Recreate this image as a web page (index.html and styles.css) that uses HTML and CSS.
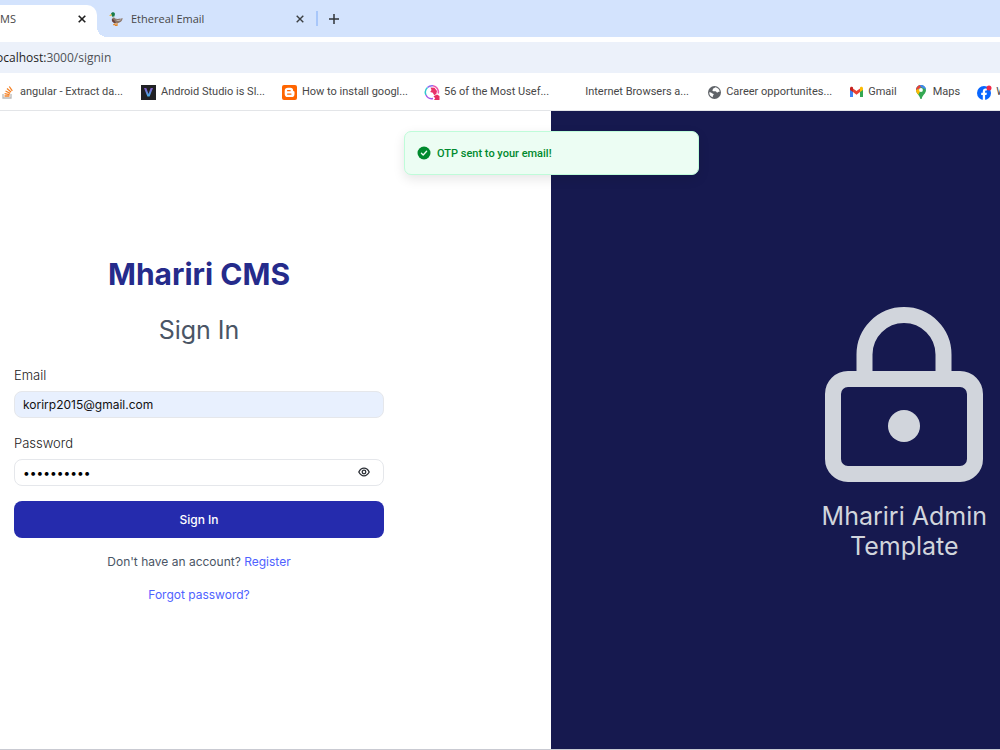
FILE: index.html
```
<!DOCTYPE html>
<html lang="en">
<head>
<meta charset="utf-8">
<title>Mhariri CMS</title>
<link rel="stylesheet" href="styles.css">
</head>
<body>
<header class="browser">
  <div class="tabs">
    <div class="tab tab-active">
      <span class="tab-title">MS</span>
      <button class="icon-button" type="button" aria-label="Close tab"><svg width="8" height="8" viewBox="0 0 8 8"><path d="M.7.7l6.6 6.6M7.3.7L.7 7.3" stroke="#1f1f1f" stroke-width="1.6"/></svg></button>
    </div>
    <div class="tab tab-idle">
      <svg class="favicon" width="14" height="14" viewBox="0 0 14 14"><path d="M3.6 5.5L5 4.6c.2 2 1.6 2.3 3.6 2.4 2.200 0 3.500-.3 5-.9-.2 2.600-1.900 5-5.400 5-3.300 0-5.300-1.500-5.100-3.600z" fill="#8b7568"/><path d="M3 6.800c-.8 2.700 1.200 4.500 4 4.300L5 8z" fill="#673f3a"/><path d="M6.500 7.500c2 .8 4 .5 6-.4-.8 2-3.700 3-6 .4z" fill="#c3b9b3"/><path d="M2 2C2.300.6 3.400 0 4.500.3c1.500.4 1.800 1.900 1.200 3L5 5.300 3.400 5z" fill="#187b4a"/><path d="M3.300 4.700L5.500 4.600v.9H3.200z" fill="#f3f3f3"/><path d="M2.200 2L.1 3.600c.8.600 2 .4 2.800-.1z" fill="#efb13b"/><path d="M6 11v1.700H4.200M8 11v2.300H6" fill="none" stroke="#e28528" stroke-width="1.200"/></svg>
      <span class="tab-title">Ethereal Email</span>
      <button class="icon-button" type="button" aria-label="Close tab"><svg width="8" height="8" viewBox="0 0 8 8"><path d="M.7.7l6.600 6.600M7.300.7L.7 7.300" stroke="#3c4043" stroke-width="1.400"/></svg></button>
    </div>
    <span class="tab-divider"></span>
    <button class="icon-button" type="button" aria-label="New tab"><svg width="10" height="10" viewBox="0 0 10 10"><path d="M5 0v10M0 5h10" stroke="#303438" stroke-width="1.500"/></svg></button>
  </div>
  <div class="address"><span class="address-clip"><span class="host">ocalhost:</span>3000/signin</span></div>
  <nav class="bookmarks" aria-label="Bookmarks">
    <a class="bookmark" href="#"><svg width="16" height="16" viewBox="0 0 16 16"><path d="M3 10v4h8v-4" fill="none" stroke="#b9b9b9" stroke-width="1.300"/><path d="M4.500 12h5M4.600 9.700l5 1M5.500 7l4.700 2.300M7 4.600l4 3.300M9.300 2.500l3 4.300" fill="none" stroke="#f48024" stroke-width="1.300"/></svg><span>angular - Extract da...</span></a>
    <a class="bookmark" href="#"><svg width="16" height="16" viewBox="0 0 16 16"><defs><linearGradient id="v" x2="0" y2="1"><stop stop-color="#8558c7"/><stop offset="1" stop-color="#45b3e8"/></linearGradient></defs><path fill="#202124" d="M0 1h15v15H0z"/><path d="M3 4h2.300L7.500 10l2.200-6H12L8.600 12.500H6.400z" fill="url(#v)"/></svg><span>Android Studio is Sl...</span></a>
    <a class="bookmark" href="#"><svg width="16" height="16" viewBox="0 0 16 16"><rect y="1" width="15" height="15" rx="2" fill="#ff6500"/><path d="M6 3.800h2.500c1.700 0 2.600 1 2.600 2.500 0 .8.200.9.800.9.400 0 .6.200.6.600v2.100c0 2.100-1.200 3.200-3.200 3.200H5.800c-2 0-3.100-1.200-3.100-3.200V7c0-2 1.200-3.200 3.300-3.200z" fill="#fff"/><path d="M5.600 6.700h2.500M5.600 10.100H9" stroke="#ff6500" stroke-width="1.300" stroke-linecap="round"/></svg><span>How to install googl...</span></a>
    <a class="bookmark" href="#"><svg width="16" height="16" viewBox="0 0 16 16"><path d="M2 11A6.400 6.400 0 0 1 3.500 3.500" fill="none" stroke="#35c7cf" stroke-width="1.500"/><path d="M3.500 3.500A6.400 6.400 0 0 1 9 1.800" fill="none" stroke="#8b6cf2" stroke-width="1.500"/><path d="M9 1.800A6.400 6.400 0 0 1 14.300 9.500" fill="none" stroke="#ed5bb0" stroke-width="1.500"/><path d="M2 11a6.400 6.400 0 0 0 7 3.500" fill="none" stroke="#a855e9" stroke-width="1.500"/><path d="M6.500 3.500l4 .2 2.500 3.300-.7 3-2.100 1.300-1.400-2.500-2.600-.7 1.300-2z" fill="#e93268"/><path d="M9.500 12.200l3.500-1.700 2.500 1.500v4h-5.500l1.200-1.700z" fill="#e72d62"/></svg><span>56 of the Most Usef...</span></a>
    <a class="bookmark" href="#"><span class="blank-icon"></span><span>Internet Browsers a...</span></a>
    <a class="bookmark" href="#"><svg width="16" height="16" viewBox="0 0 16 16"><circle cx="8.500" cy="8.500" r="6.500" fill="#5f6368"/><path d="M3.300 8.200c1.200-.1 2 .2 2.700 1 .5.600 1.700.2 1.700 1.300 0 .9-.9.800-.9 1.600v1.200c-2.200-.7-3.800-2.700-3.500-5.100zM9 3.200c-.1 1-1 .9-1.700 1.200-.8.300-.2 1.100-.7 1.700-.4.500-.1 1.100.7 1.200h2.200c.8 0 .7 1.200 1.600 1.200.8 0 .9-.8 1.700-.8h.9C13.500 5.300 11.700 3.400 9 3.200z" fill="#fff"/></svg><span>Career opportunites...</span></a>
    <a class="bookmark bookmark-short" href="#"><svg width="16" height="16" viewBox="0 0 16 16"><path d="M2 4v9h3V7z" fill="#4285f4"/><path d="M15 4v9h-3V7z" fill="#34a853"/><path d="M5 4.400l3.500 2.700L12 4.400V8l-3.500 2.700L5 8z" fill="#ea4335"/><path d="M2 6V4.200c0-1.400 1.500-2 2.500-1.100l.5.400V8z" fill="#c5221f"/><path d="M15 6V4.200c0-1.400-1.500-2-2.500-1.100l-.5.400V8z" fill="#fbbc04"/></svg><span>Gmail</span></a>
    <a class="bookmark bookmark-short" href="#"><svg width="16" height="16" viewBox="0 0 16 16"><defs><clipPath id="p"><path d="M8 1a5 5 0 0 1 5 5c0 3.500-3.600 5.300-4.200 8.400-.2.900-1.400.9-1.600 0C6.600 11.300 3 9.500 3 6a5 5 0 0 1 5-5z"/></clipPath></defs><g clip-path="url(#p)"><path fill="#34a853" d="M0 0h16v16H0z"/><path d="M3 8l5-5 6 3V0H2z" fill="#4285f4"/><path d="M1 0h5l2 3-5 4H1z" fill="#ea4335"/><path d="M2 7l3-2 3 1-3 5z" fill="#fbbc04"/></g><circle cx="8" cy="6" r="1.900" fill="#fff"/></svg><span>Maps</span></a>
    <a class="bookmark bookmark-short" href="#"><svg width="16" height="16" viewBox="0 0 16 16"><circle cx="8" cy="9" r="7" fill="#0866ff"/><path d="M6.800 16v-5H5.200V8.700h1.600V7.600c0-2.500 1.200-3.500 4.100-3.100v2c-1.500-.1-1.800.2-1.800 1.200v1h1.800l-.4 2.300H9.100v5z" fill="#fff"/><circle cx="13" cy="4" r="2.500" fill="#f02849"/></svg><span>W</span></a>
  </nav>
</header>
<main class="page">
  <section class="signin">
    <form class="form">
      <h1 class="brand">Mhariri CMS</h1>
      <h2 class="heading">Sign In</h2>
      <label class="label" for="email">Email</label>
      <input class="field field-filled" id="email" type="email" value="korirp2015@gmail.com">
      <label class="label" for="password">Password</label>
      <div class="field password">
        <input class="password-input" id="password" type="password" value="abcdefghij">
        <button class="icon-button" type="button" aria-label="Show password"><svg width="12" height="10" viewBox="0 0 12 10" fill="none" stroke="#2b2f36" stroke-width="1.300"><path d="M.8 5C2.200 2.300 3.900 1.200 6 1.200S9.800 2.300 11.200 5C9.800 7.700 8.100 8.800 6 8.800S2.200 7.700.8 5z"/><circle cx="6" cy="5" r="1.800"/></svg></button>
      </div>
      <button class="submit" type="button">Sign In</button>
      <p class="note">Don't have an account? <a class="link" href="#">Register</a></p>
      <p class="note"><a class="link" href="#">Forgot password?</a></p>
    </form>
  </section>
  <aside class="promo">
    <div class="promo-content">
      <svg width="160" height="176" viewBox="0 0 160 176" fill="none" stroke="#d1d5dc" stroke-width="16"><rect x="9" y="72" width="142" height="95" rx="15"/><path d="M40.500 72V47.500a39.500 39.500 0 0 1 79 0V72"/><circle cx="80" cy="119" r="16" fill="#d1d5dc" stroke="none"/></svg>
      <p class="promo-text">Mhariri Admin<br>Template</p>
    </div>
  </aside>
  <div class="toast" role="status"><svg width="14" height="14" viewBox="0 0 14 14"><circle cx="7" cy="7" r="6.500" fill="#008a2e"/><path d="M4.400 7.200l1.800 1.800 3.400-3.800" fill="none" stroke="#ecfdf3" stroke-width="1.300" stroke-linecap="round" stroke-linejoin="round"/></svg><span>OTP sent to your email!</span></div>
</main>
</body>
</html>
```
FILE: styles.css
```
* { box-sizing: border-box; }
body {
  margin: 0;
  min-height: 100vh;
  display: flex;
  flex-direction: column;
  overflow-x: hidden;
  background: #fff;
  font-family: Inter, sans-serif;
}
h1, h2, p { margin: 0; }
a { text-decoration: none; }
svg { flex: none; display: block; }
.icon-button {
  display: flex;
  padding: 0;
  border: 0;
  background: none;
}
.browser {
  border-bottom: 1px solid #e3e5e8;
  color: #474747;
  font-family: "Open Sans", "Noto Sans", sans-serif;
  font-size: 11px;
}
.tabs {
  display: flex;
  align-items: center;
  height: 37px;
  background: #d3e3fd;
}
.tab { display: flex; align-items: center; }
.tab-title { flex: 1; }
.tab-active {
  position: relative;
  align-self: flex-end;
  width: 97px;
  height: 32px;
  padding: 0 11px 5px 0;
  border-radius: 0 10px 0 0;
  background: #fff;
}
.tab-active::after {
  content: "";
  position: absolute;
  left: 100%;
  bottom: 0;
  width: 10px;
  height: 10px;
  background: radial-gradient(circle at 100% 0, transparent 10px, #fff 10px);
}
.tab-idle { width: 207px; padding-left: 12px; gap: 8px; }
.tab-divider {
  width: 2px;
  height: 15px;
  margin: 0 11px 0 12px;
  background: #a8c7fa;
}
.address {
  display: flex;
  height: 31px;
  margin-top: 5px;
  align-items: center;
  background: #ecf1fa;
  font-size: 12px;
  color: #4e5257;
}
.address-clip { margin-left: -4px; }
.host { color: #1f1f1f; }
.bookmarks {
  display: flex;
  gap: 16px;
  height: 37px;
  overflow: hidden;
  font-family: Roboto, "Noto Sans", sans-serif;
}
.bookmark {
  flex: 0 0 125px;
  display: flex;
  align-items: center;
  gap: 4px;
  color: inherit;
  white-space: nowrap;
}
.bookmark-short { flex-basis: auto; }
.blank-icon { width: 16px; }
.page {
  position: relative;
  flex: 1;
  display: flex;
  border-bottom: 1px solid #c9cad2;
}
.signin {
  flex: 0 0 55.1%;
  display: flex;
  align-items: center;
  padding: 12px 14px 0;
}
.form {
  display: flex;
  flex-direction: column;
  width: 100%;
  max-width: 370px;
}
.brand {
  color: #252b8b;
  font-size: 30px;
  font-weight: 700;
  line-height: 36px;
  text-align: center;
}
.heading {
  margin: 22px 0 19px;
  color: #4a5565;
  font-size: 25px;
  font-weight: 400;
  line-height: 32px;
  text-align: center;
}
.label {
  margin-bottom: 6px;
  color: #222;
  font-size: 13px;
  font-weight: 300;
  line-height: 20px;
}
.field {
  height: 27px;
  margin-bottom: 15px;
  padding: 0 8px;
  border: 1px solid #e5e7eb;
  border-radius: 8px;
  background: #fff;
  color: #111;
  font: 12px Inter, sans-serif;
}
.field-filled { background: #e8f0fe; }
.password { display: flex; align-items: center; padding-right: 13px; }
.password-input {
  flex: 1;
  padding: 0;
  border: 0;
  outline: 0;
  font: inherit;
}
.submit {
  height: 37px;
  margin-bottom: 13px;
  border: 0;
  border-radius: 8px;
  background: #252bad;
  color: #fff;
  font: 500 12px Inter, sans-serif;
}
.note {
  margin-bottom: 11px;
  color: #4a5565;
  font-size: 12px;
  line-height: 22px;
  text-align: center;
}
.link { color: #4f62ff; }
.promo {
  flex: 1;
  display: flex;
  align-items: center;
  justify-content: flex-end;
  padding: 7px 13px 0 0;
  background: #16194f;
}
.promo-content {
  display: flex;
  flex-direction: column;
  align-items: center;
  gap: 18px;
}
.promo-text {
  color: #d1d5dc;
  font-size: 25px;
  line-height: 30px;
  text-align: center;
}
.toast {
  position: absolute;
  top: 20px;
  left: 404px;
  width: 295px;
  height: 44px;
  display: flex;
  align-items: center;
  gap: 6px;
  padding: 0 12px;
  border: 1px solid #bffcd9;
  border-radius: 7px;
  background: #ecfdf3;
  box-shadow: 0 4px 12px rgba(0, 0, 0, .1);
  color: #008a2e;
  font: 500 11px Roboto, "Noto Sans", sans-serif;
}
```
